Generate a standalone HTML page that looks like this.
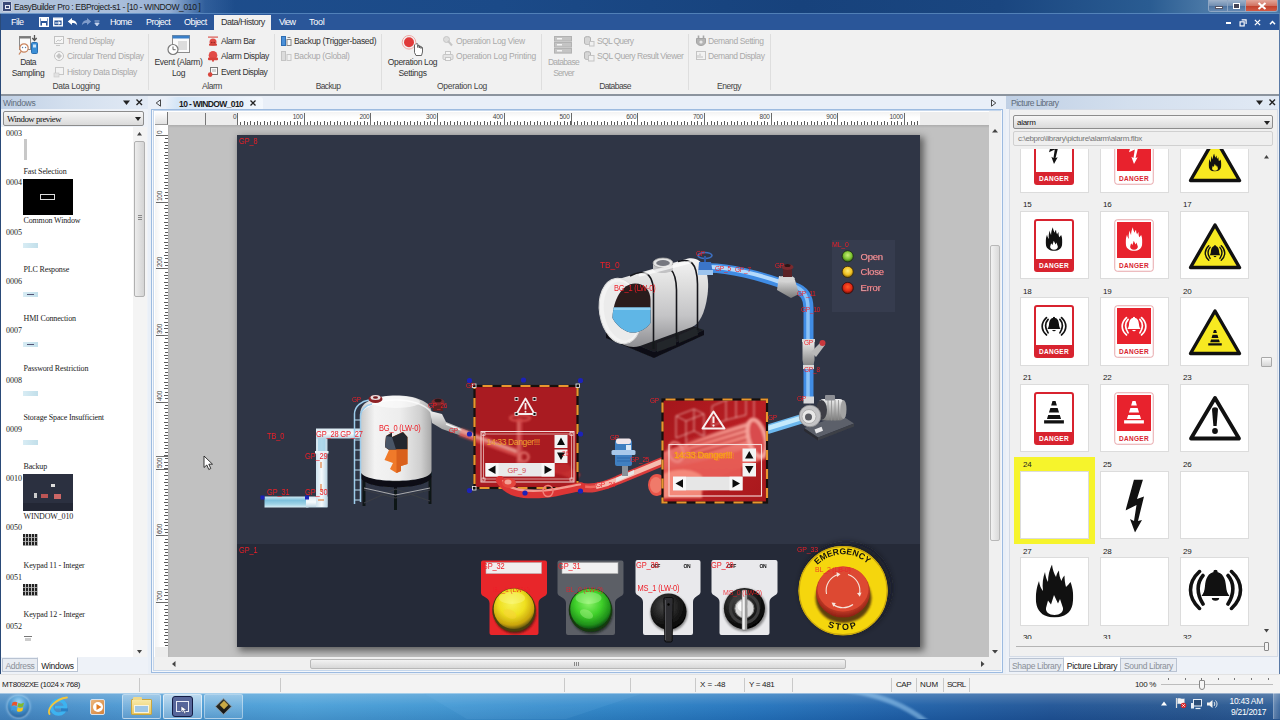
<!DOCTYPE html>
<html>
<head>
<meta charset="utf-8">
<title>EasyBuilder Pro : EBProject-s1 - [10 - WINDOW_010 ]</title>
<style>
*{box-sizing:border-box;margin:0;padding:0}
html,body{width:1280px;height:720px;overflow:hidden;background:#e9eff7;font-family:"Liberation Sans",sans-serif;font-size:9px;color:#222}
.a{position:absolute}
.t{position:absolute;white-space:nowrap;line-height:1}
#titlebar{left:0;top:0;width:1280px;height:14px;background:linear-gradient(90deg,#b3c4db 0,#a9bedb 120px,#93aed3 170px,rgba(60,105,165,.6) 205px,rgba(30,78,140,0) 235px),linear-gradient(90deg,#1f4f8e 0,#1b4a88 500px,#17427c 800px,#1a4680 1000px,#2a5c92 1150px,#4a78a6 1205px)}
#menubar{left:0;top:14px;width:1280px;height:16px;background:#2a5699}
#menubar .t{color:#fff;font-size:9px;top:4px}
#ribbon{left:0;top:30px;width:1280px;height:66px;background:#f1f1f1;border-bottom:2px solid #8c949e}
#ribbon .t{font-size:8.5px;color:#333}
#ribbon .d{color:#a9a9a9}
#ribbon .g{color:#444}
.sep{position:absolute;top:4px;width:1px;height:56px;background:#dedede}

body{letter-spacing:-.3px}
.hdr{position:absolute;height:13px;background:linear-gradient(90deg,#c0d0e5,#d3dfee 45%,#e2eaf5);}
.hdr .t{top:2.5px;font-size:8.5px;color:#5e6b7a}
.serif{font-family:"Liberation Serif",serif;letter-spacing:0}
#leftlist .n{position:absolute;left:5px;font:8px "Liberation Serif",serif;letter-spacing:0;color:#222;line-height:1}
#leftlist .l{position:absolute;left:22.5px;font:8px "Liberation Serif",serif;letter-spacing:-.15px;color:#222;line-height:1;white-space:nowrap}
.btab{position:absolute;top:658px;height:14px;font-size:8.5px;line-height:1;padding-top:3px;text-align:center;color:#8a8f98;border:1px solid #b9c3d2;background:#e8ecf2}
.btab.on{background:#fff;color:#222;border-top-color:#fff;height:15px}
.cell{position:absolute;width:68.5px;height:68.5px;background:#fff;border:1px solid #dcdcdc}
.cn{position:absolute;font-size:8px;color:#222;line-height:1}
#status .t{top:6px;font-size:8px;color:#1a1a1a}
#status .s{position:absolute;top:3px;width:1px;height:14px;background:#c9c9c9}
</style>
</head>
<body>
<!-- TITLE BAR -->
<div id="titlebar" class="a">
  <div class="t" style="letter-spacing:-0.372px;left:14px;top:3px;font-size:8.5px;color:#1a1a1a">EasyBuilder Pro : EBProject-s1 - [10 - WINDOW_010 ]</div>
  <div class="a" style="left:2px;top:1px;width:10px;height:11px;background:#3a4a78;border:1px solid #c8d2e4;border-radius:1px"><div class="a" style="left:2px;top:3px;width:5px;height:4px;border:1px solid #e8ecf6"></div></div>
  <div class="a" style="left:0;top:13px;width:1280px;height:1px;background:#5f8fc4;opacity:.8"></div>
  <div class="a" style="left:1208px;top:0;width:70px;height:12px;border:1px solid #8fa7c4;border-top:none;border-radius:0 0 3px 3px;overflow:hidden">
    <div class="a" style="left:0;top:0;width:19px;height:12px;background:linear-gradient(#9fb3cb,#6f8db1 50%,#4d729f 50%,#6a8db5);border-right:1px solid #8fa7c4"></div>
    <div class="a" style="left:19px;top:0;width:18px;height:12px;background:linear-gradient(#9fb3cb,#6f8db1 50%,#4d729f 50%,#6a8db5);border-right:1px solid #8fa7c4"></div>
    <div class="a" style="left:37px;top:0;width:33px;height:12px;background:linear-gradient(#e3a79b,#d0705f 50%,#c1402c 50%,#d6604a)"></div>
    <div class="a" style="left:6px;top:6px;width:8px;height:3px;background:#fff;border:0.5px solid #556"></div>
    <div class="a" style="left:24px;top:3px;width:7px;height:6px;border:1.500px solid #fff;background:#445"></div>
    <svg class="a" style="left:48px;top:2px" width="10" height="8"><path d="M1.500 1l7 6M8.500 1l-7 6" stroke="#fff" stroke-width="2"/></svg>
  </div>
</div>
<!-- MENU BAR -->
<div id="menubar" class="a">
  <div class="t" style="letter-spacing:-0.504px;left:11px">File</div>
  <div class="t" style="letter-spacing:-0.566px;left:110px">Home</div>
  <div class="t" style="letter-spacing:-0.538px;left:146px">Project</div>
  <div class="t" style="letter-spacing:-0.544px;left:184px">Object</div>
  <div class="a" style="left:214px;top:1px;width:57px;height:15px;background:#f1f1f1"></div>
  <div class="t" style="letter-spacing:-0.480px;left:221px;color:#333">Data/History</div>
  <div class="t" style="letter-spacing:-0.777px;left:279px">View</div>
  <div class="t" style="letter-spacing:-0.254px;left:309px">Tool</div>

  <svg class="a" style="left:39px;top:3px" width="10" height="10" viewBox="0 0 10 10"><rect x=".7" y=".7" width="8.600" height="8.600" fill="none" stroke="#fff" stroke-width="1.400"/><rect x="2" y="1" width="6" height="3" fill="#fff"/><rect x="3" y="6" width="4" height="3.500" fill="#fff"/></svg>
  <svg class="a" style="left:53px;top:3px" width="10" height="10" viewBox="0 0 10 10"><rect x=".7" y="1.200" width="8.600" height="7.600" fill="none" stroke="#fff" stroke-width="1.400"/><path d="M1 2h8v1.500H1zM2 5.500h3.500V4L8 6 5.500 8V6.500H2z" fill="#fff"/></svg>
  <svg class="a" style="left:67px;top:3px" width="11" height="10" viewBox="0 0 11 10"><path d="M5 1L.8 4.500 5 8V6c2.500 0 4 .5 5.200 2.500C10 5 8 3.200 5 3z" fill="#fff"/></svg>
  <svg class="a" style="left:81px;top:3px" width="11" height="10" viewBox="0 0 11 10"><path d="M6 1l4.200 3.500L6 8V6C3.500 6 2 6.500.8 8.500 1 5 3 3.200 6 3z" fill="#7f9ccb"/></svg>
  <svg class="a" style="left:94px;top:6px" width="6" height="7" viewBox="0 0 6 7"><path d="M.5 1h5M.8 3h4.400L3 6z" fill="#c8d6ee" stroke="#c8d6ee" stroke-width=".8"/></svg>
  <div class="a" style="left:1225.500px;top:8px;width:5px;height:2px;background:#fff"></div>
  <svg class="a" style="left:1239px;top:4.500px" width="8" height="8" viewBox="0 0 9 9"><path d="M3 1h5v4.500" fill="none" stroke="#fff" stroke-width="1.300"/><rect x="1.200" y="3.200" width="4.600" height="4.600" fill="none" stroke="#fff" stroke-width="1.300"/></svg>
  <svg class="a" style="left:1254px;top:5px" width="7" height="7" viewBox="0 0 8 8"><path d="M1 1l6 6M7 1L1 7" stroke="#fff" stroke-width="1.500"/></svg>
  <svg class="a" style="left:1268.500px;top:6px" width="7" height="5" viewBox="0 0 8 6"><path d="M1 5l3-3.200L7 5" stroke="#fff" stroke-width="1.800" fill="none"/></svg>
</div>
<!-- RIBBON -->
<div id="ribbon" class="a">
  <!-- Data Logging group -->
  <svg class="a" style="left:17px;top:4px" width="24" height="24" viewBox="0 0 24 24">
    <rect x="2.5" y="2.5" width="11" height="13" fill="#fafafa" stroke="#8a8a8a"/>
    <rect x="2.5" y="2.5" width="11" height="2" fill="#7a7a7a"/>
    <circle cx="7" cy="14" r="4.2" fill="#fff" stroke="#c9855f" stroke-width="1.2"/>
    <path d="M5.5 13.5h.1M8.5 13.5h.1" stroke="#5a7fa8" stroke-width="1.3" stroke-linecap="round"/>
    <path d="M4 17.5l-2 3" stroke="#c9855f" stroke-width="1.3"/>
    <rect x="14.5" y="8.5" width="6" height="11" rx="1" fill="#3b8fd6" stroke="#2a6fb0"/>
    <rect x="16" y="10.5" width="3" height="3" fill="#cfe6fa"/>
    <path d="M17.5 1v5M15.3 4l2.2 2.5 2.2-2.5" stroke="#555" stroke-width="1.3" fill="none"/>
  </svg>
  <div class="t" style="letter-spacing:-0.555px;left:18px;top:28px;width:20px;text-align:center">Data</div>
  <div class="t" style="letter-spacing:-0.336px;left:8px;top:38.5px;width:40px;text-align:center">Sampling</div>
  <svg class="a" style="left:53px;top:5px" width="12" height="12" viewBox="0 0 12 12"><rect x="1.5" y="1.5" width="9" height="7" fill="#f6f6f6" stroke="#c2c2c2"/><path d="M3 10.5h4M3 7l2-2 2 1 2-2" stroke="#c8c8c8" fill="none"/></svg>
  <div class="t d" style="letter-spacing:-0.356px;left:67px;top:6.5px">Trend Display</div>
  <svg class="a" style="left:53px;top:20px" width="12" height="12" viewBox="0 0 12 12"><circle cx="6" cy="6" r="4.5" fill="#f6f6f6" stroke="#c2c2c2"/><path d="M6 3l3 3-3 3-3-3z" fill="#c4c4c4"/></svg>
  <div class="t d" style="letter-spacing:-0.312px;left:67px;top:22px">Circular Trend Display</div>
  <svg class="a" style="left:53px;top:36px" width="12" height="12" viewBox="0 0 12 12"><rect x="2.5" y="1.5" width="8" height="7" fill="#f3f3f3" stroke="#c6c6c6"/><rect x="1" y="7" width="5" height="4" fill="#e2e2e2" stroke="#c8c8c8" stroke-width=".6"/></svg>
  <div class="t d" style="letter-spacing:-0.350px;left:67px;top:37.5px">History Data Display</div>
  <div class="t g" style="letter-spacing:-0.277px;left:26px;top:52px;width:100px;text-align:center">Data Logging</div>
  <div class="sep" style="left:148px"></div>
  <!-- Alarm group -->
  <svg class="a" style="left:166px;top:4px" width="26" height="24" viewBox="0 0 26 24">
    <rect x="6.5" y="1.5" width="17" height="17" fill="#fbfbfb" stroke="#8c8c8c"/>
    <rect x="6.5" y="1.5" width="17" height="3" fill="#3a7fc8"/>
    <rect x="12" y="7" width="9" height="9" fill="#dcdcdc"/>
    <circle cx="7" cy="15.5" r="5" fill="#fff" stroke="#7a7a7a" stroke-width="1.2"/>
    <path d="M7 12.5v3.2h2.6" stroke="#666" fill="none"/>
  </svg>
  <div class="t" style="letter-spacing:-0.305px;left:148px;top:28px;width:61px;text-align:center">Event (Alarm)</div>
  <div class="t" style="letter-spacing:-0.396px;left:148px;top:38.5px;width:61px;text-align:center">Log</div>
  <svg class="a" style="left:207px;top:5px" width="12" height="12" viewBox="0 0 12 12"><rect x="1" y="1.5" width="10" height="1.200" fill="#dc5850"/><circle cx="6" cy="7" r="3.500" fill="#de4a44"/><rect x="2" y="8.800" width="8" height="2" rx=".8" fill="#d04038"/><circle cx="4.800" cy="7.500" r=".7" fill="#8a2420"/><circle cx="7.200" cy="7.500" r=".7" fill="#8a2420"/></svg>
  <div class="t" style="letter-spacing:-0.394px;left:221px;top:6.5px">Alarm Bar</div>
  <svg class="a" style="left:207px;top:20px" width="12" height="12" viewBox="0 0 12 12"><circle cx="6" cy="5.300" r="4.300" fill="#e24a46"/><rect x="1" y="7.600" width="10" height="2.600" rx="1" fill="#d8403a"/><circle cx="6" cy="10.800" r="1" fill="#d8403a"/></svg>
  <div class="t" style="letter-spacing:-0.341px;left:221px;top:22px">Alarm Display</div>
  <svg class="a" style="left:207px;top:36px" width="12" height="12" viewBox="0 0 12 12"><rect x="3.5" y="1.5" width="7" height="7" fill="#f8f8f8" stroke="#777"/><rect x="5" y="3" width="4" height="3" fill="#d5d5d5"/><circle cx="3.2" cy="8.6" r="2.3" fill="#d9453c"/></svg>
  <div class="t" style="letter-spacing:-0.440px;left:221px;top:37.5px">Event Display</div>
  <div class="t g" style="letter-spacing:-0.441px;left:172px;top:52px;width:80px;text-align:center">Alarm</div>
  <div class="sep" style="left:274px"></div>
  <!-- Backup group -->
  <svg class="a" style="left:280px;top:5px" width="12" height="12" viewBox="0 0 12 12"><rect x="1.5" y="1.5" width="4" height="9" fill="#4a90d8" stroke="#2e6db2"/><rect x="7" y="4.5" width="4" height="6" fill="#fafafa" stroke="#888"/><path d="M7.5 2.5h3" stroke="#888"/></svg>
  <div class="t" style="letter-spacing:-0.306px;left:294px;top:6.5px">Backup (Trigger-based)</div>
  <svg class="a" style="left:280px;top:20px" width="12" height="12" viewBox="0 0 12 12"><rect x="1.5" y="1.5" width="4" height="9" fill="#dcdcdc" stroke="#c4c4c4"/><rect x="7" y="4.5" width="4" height="6" fill="#f2f2f2" stroke="#c8c8c8"/></svg>
  <div class="t d" style="letter-spacing:-0.364px;left:294px;top:22px">Backup (Global)</div>
  <div class="t g" style="letter-spacing:-0.602px;left:288px;top:52px;width:80px;text-align:center">Backup</div>
  <div class="sep" style="left:381px"></div>
  <!-- Operation Log -->
  <svg class="a" style="left:400px;top:3px" width="26" height="26" viewBox="0 0 26 26">
    <circle cx="9" cy="9.300" r="6.800" fill="none" stroke="#f0a8a4" stroke-width="1"/>
    <circle cx="9" cy="9.300" r="5" fill="#e03a3a"/>
    <path d="M14.5 11.5v8l1.5 3h5.5l1-3.5v-4.5l-1.5-.6v1.6-2l-1.6-.5v2-2.3l-1.6-.5v2.3V11.5c0-1.4-1.8-1.4-1.8 0" fill="#fff" stroke="#555" stroke-width=".9" stroke-linejoin="round"/>
  </svg>
  <div class="t" style="letter-spacing:-0.337px;left:382px;top:28px;width:61px;text-align:center">Operation Log</div>
  <div class="t" style="letter-spacing:-0.309px;left:382px;top:38.5px;width:61px;text-align:center">Settings</div>
  <svg class="a" style="left:442px;top:5px" width="12" height="12" viewBox="0 0 12 12"><circle cx="4.5" cy="4.5" r="3" fill="#ddd" stroke="#c6c6c6"/><path d="M6 6l4 4.5" stroke="#c6c6c6" stroke-width="2"/></svg>
  <div class="t d" style="letter-spacing:-0.320px;left:456px;top:6.5px">Operation Log View</div>
  <svg class="a" style="left:442px;top:20px" width="12" height="12" viewBox="0 0 12 12"><rect x="1" y="4.5" width="10" height="5" rx="1" fill="#e4e4e4" stroke="#c6c6c6"/><rect x="3.5" y="1.5" width="5" height="3" fill="#f6f6f6" stroke="#c6c6c6"/><rect x="3.5" y="7.5" width="5" height="3" fill="#f6f6f6" stroke="#c6c6c6"/></svg>
  <div class="t d" style="letter-spacing:-0.230px;left:456px;top:22px">Operation Log Printing</div>
  <div class="t g" style="letter-spacing:-0.298px;left:412px;top:52px;width:100px;text-align:center">Operation Log</div>
  <div class="sep" style="left:541px"></div>
  <!-- Database -->
  <svg class="a" style="left:553px;top:5px" width="20" height="20" viewBox="0 0 20 20"><g fill="#c4c4c4" stroke="#b2b2b2"><rect x="1.5" y="1.5" width="17" height="4.6"/><rect x="1.5" y="7.5" width="17" height="4.6"/><rect x="1.5" y="13.5" width="17" height="4.6"/></g><path d="M4 3.8h5M4 9.8h5M4 15.8h5" stroke="#f4f4f4" stroke-width="1.4"/></svg>
  <div class="t d" style="letter-spacing:-0.643px;left:533px;top:28px;width:61px;text-align:center">Database</div>
  <div class="t d" style="letter-spacing:-0.716px;left:533px;top:38.5px;width:61px;text-align:center">Server</div>
  <svg class="a" style="left:583px;top:5px" width="12" height="12" viewBox="0 0 12 12"><ellipse cx="4.5" cy="3" rx="3" ry="1.5" fill="#d0d0d0" stroke="#b4b4b4"/><path d="M1.5 3v5c0 2 6 2 6 0V3" fill="#d6d6d6" stroke="#b4b4b4"/><rect x="6.5" y="6.5" width="4.5" height="4.5" fill="#f0f0f0" stroke="#c4c4c4"/></svg>
  <div class="t d" style="letter-spacing:-0.661px;left:597px;top:6.5px">SQL Query</div>
  <svg class="a" style="left:583px;top:20px" width="12" height="12" viewBox="0 0 12 12"><ellipse cx="4.5" cy="3" rx="3" ry="1.5" fill="#d0d0d0" stroke="#b4b4b4"/><path d="M1.5 3v5c0 2 6 2 6 0V3" fill="#d6d6d6" stroke="#b4b4b4"/><rect x="5.5" y="5.5" width="5.5" height="5.5" fill="#f0f0f0" stroke="#c4c4c4"/></svg>
  <div class="t d" style="letter-spacing:-0.450px;left:597px;top:22px">SQL Query Result Viewer</div>
  <div class="t g" style="letter-spacing:-0.580px;left:575px;top:52px;width:80px;text-align:center">Database</div>
  <div class="sep" style="left:688px"></div>
  <!-- Energy -->
  <svg class="a" style="left:695px;top:5px" width="12" height="12" viewBox="0 0 12 12"><path d="M3.5 .5v3M8.5 .5v3" stroke="#a8a8a8" stroke-width="1.600"/><path d="M1.500 3.500h9v3.500c0 2-2 3.500-4.500 3.500S1.500 9 1.500 7z" fill="#b4b4b4" stroke="#a4a4a4"/><circle cx="6" cy="7" r="1.600" fill="#e8e8e8"/></svg>
  <div class="t d" style="letter-spacing:-0.390px;left:708px;top:6.5px">Demand Setting</div>
  <svg class="a" style="left:695px;top:20px" width="12" height="12" viewBox="0 0 12 12"><rect x="1.5" y="1.5" width="9" height="8" fill="#f2f2f2" stroke="#c4c4c4"/><path d="M3 8V5M5 8V3.5M7 8V6" stroke="#c8c8c8" stroke-width="1.2"/></svg>
  <div class="t d" style="letter-spacing:-0.420px;left:708px;top:22px">Demand Display</div>
  <div class="t g" style="letter-spacing:-0.490px;left:689px;top:52px;width:80px;text-align:center">Energy</div>
  <div class="sep" style="left:770px"></div>
</div>

<!-- strip under ribbon -->
<!-- LEFT PANEL -->
<div class="a" style="left:0;top:96px;width:148px;height:578px;background:#eef2f8"></div>
<div class="hdr" style="left:0;top:96px;width:148px">
  <div class="t" style="left:3px">Windows</div>
  <svg class="a" style="left:123px;top:3px" width="8" height="7"><path d="M0 1.5h7L3.5 6z" fill="#222"/></svg>
  <svg class="a" style="left:135px;top:2px" width="9" height="9"><path d="M1.5 1.5l5.5 5.5M7 1.5L1.5 7" stroke="#222" stroke-width="1.4"/></svg>
</div>
<div class="a" style="left:3px;top:111px;width:141px;height:15px;border:1px solid #8c8c8c;border-radius:2px;background:linear-gradient(#f6f6f6,#dadada)">
  <div class="t serif" style="left:3px;top:2.500px;font-size:8.800px;color:#111;letter-spacing:-.45px">Window preview</div>
  <svg class="a" style="left:131px;top:5px" width="7" height="5"><path d="M0 0h6L3 4z" fill="#222"/></svg>
</div>
<div id="leftlist" class="a" style="left:1px;top:127px;width:146px;height:530px;background:#fff;overflow:hidden">
<div class="n" style="top:3.0px">0003</div>
<div class="l" style="top:40.5px">Fast Selection</div>
<div class="a" style="left:23px;top:12.0px;width:3px;height:21px;background:#c8c8c8"></div>
<div class="n" style="top:52.3px">0004</div>
<div class="l" style="top:89.8px">Common Window</div>
<div class="a" style="left:22px;top:52.3px;width:50px;height:36px;background:#000"><div class="a" style="left:17px;top:15px;width:15px;height:6px;border:1px solid #ddd"></div></div>
<div class="n" style="top:101.6px">0005</div>
<div class="l" style="top:139.1px">PLC Response</div>
<div class="a" style="left:22px;top:116.1px;width:15px;height:5px;background:linear-gradient(90deg,#d8ecf4,#c2dfea)"></div>
<div class="n" style="top:150.9px">0006</div>
<div class="l" style="top:188.4px">HMI Connection</div>
<div class="a" style="left:22px;top:165.4px;width:15px;height:5px;background:linear-gradient(90deg,#d8ecf4,#c2dfea)"><div class="a" style="left:4px;top:2px;width:7px;height:1px;background:#557"></div></div>
<div class="n" style="top:200.2px">0007</div>
<div class="l" style="top:237.7px">Password Restriction</div>
<div class="a" style="left:22px;top:214.7px;width:15px;height:5px;background:linear-gradient(90deg,#d8ecf4,#c2dfea)"><div class="a" style="left:4px;top:2px;width:7px;height:1px;background:#557"></div></div>
<div class="n" style="top:249.5px">0008</div>
<div class="l" style="top:287.0px">Storage Space Insufficient</div>
<div class="a" style="left:22px;top:264.0px;width:15px;height:5px;background:linear-gradient(90deg,#d8ecf4,#c2dfea)"></div>
<div class="n" style="top:298.8px">0009</div>
<div class="l" style="top:336.3px">Backup</div>
<div class="a" style="left:22px;top:313.3px;width:15px;height:5px;background:linear-gradient(90deg,#d8ecf4,#c2dfea)"></div>
<div class="n" style="top:348.1px">0010</div>
<div class="l" style="top:385.6px">WINDOW_010</div>
<div class="a" style="left:22px;top:347.1px;width:50px;height:36px;background:#2b3040"><div class="a" style="left:0;top:29px;width:50px;height:8px;background:#232735"></div><div class="a" style="left:28px;top:10px;width:4px;height:3px;background:#ddd"></div><div class="a" style="left:11px;top:19px;width:3px;height:5px;background:#ccc"></div><div class="a" style="left:18px;top:20px;width:7px;height:4px;background:#b55"></div><div class="a" style="left:31px;top:20px;width:7px;height:5px;background:#c66"></div></div>
<div class="n" style="top:397.4px">0050</div>
<div class="l" style="top:434.9px">Keypad 11 - Integer</div>
<div class="a" style="left:22px;top:407.4px;width:15px;height:12px;background:#222;background-image:repeating-linear-gradient(90deg,transparent 0 2px,#bbb 2px 3px),repeating-linear-gradient(transparent 0 3px,#999 3px 4px)"></div>
<div class="n" style="top:446.7px">0051</div>
<div class="l" style="top:484.2px">Keypad 12 - Integer</div>
<div class="a" style="left:22px;top:456.7px;width:15px;height:12px;background:#222;background-image:repeating-linear-gradient(90deg,transparent 0 2px,#bbb 2px 3px),repeating-linear-gradient(transparent 0 3px,#999 3px 4px)"></div>
<div class="n" style="top:496.0px">0052</div>
<div class="a" style="left:23px;top:509.0px;width:8px;height:1px;background:#777"></div><div class="a" style="left:24px;top:511.0px;width:6px;height:3px;background:#ccc"></div>
<div class="a" style="left:132px;top:0;width:14px;height:530px;background:#f4f4f4"></div>
<svg class="a" style="left:135.500px;top:5px" width="5" height="4"><path d="M0 3.5h5L2.500 0z" fill="#444"/></svg>
<svg class="a" style="left:135.500px;top:523px" width="5" height="4"><path d="M0 0h5L2.500 3.500z" fill="#444"/></svg>
<div class="a" style="left:133px;top:14px;width:10.500px;height:156px;border:1px solid #b0b0b0;border-radius:2px;background:linear-gradient(90deg,#ececec,#d4d4d4)"></div>
<div class="a" style="left:136.500px;top:88px;width:4px;height:5px;background:repeating-linear-gradient(#888 0 1px,transparent 1px 2px)"></div>
</div>
<div class="btab" style="left:2px;width:36px">Address</div>
<div class="btab on" style="left:37px;top:657px;width:41px;padding-top:4px">Windows</div>

<!-- CENTER -->
<div class="a" style="left:150px;top:96px;width:854px;height:14px;background:#e9eff8"></div>
<svg class="a" style="left:155px;top:99px" width="7" height="8"><path d="M5.5 .8L1.2 4l4.3 3.2z" fill="none" stroke="#333" stroke-width=".9"/></svg>
<div class="a" style="left:166px;top:97px;width:97px;height:13px;background:linear-gradient(100deg,rgba(255,255,255,0) 0,#d5e6f7 12px,#e4eefa 60%,#f4f8fd);border-radius:0 3px 0 0"></div>
<div class="t" style="left:179px;top:99.5px;font-size:8.5px;font-weight:bold;color:#1a1a1a;letter-spacing:-.6px">10 - WINDOW_010</div>
<svg class="a" style="left:249px;top:99px" width="9" height="9"><path d="M1.5 1.5l5 5M6.5 1.5l-5 5" stroke="#222" stroke-width="1.3"/></svg>
<svg class="a" style="left:990px;top:99px" width="7" height="8"><path d="M1.5 .8L5.8 4 1.5 7.2z" fill="none" stroke="#333" stroke-width=".9"/></svg>
<div class="a" style="left:151px;top:109px;width:852px;height:564px;border:1px solid #9dbbe0;background:#f4f7fb"></div>
<div class="a" style="left:153px;top:110px;width:848px;height:561px;border:1px solid #c4d6ec;background:#fff"></div>
<!-- workspace gray -->
<div class="a" style="left:168px;top:125px;width:821px;height:532px;background:#c1c1c1"></div>
<div class="a" style="left:168px;top:125px;width:821px;height:3px;background:linear-gradient(#adadad,#c1c1c1)"></div>
<div class="a" style="left:168px;top:125px;width:2px;height:532px;background:linear-gradient(90deg,#b4b4b4,rgba(193,193,193,0))"></div>
<!-- rulers placeholder -->
<div id="rulers">
<div class="a" style="left:155px;top:112px;width:834px;height:13px;background:#ededed;overflow:hidden">
<div class="a" style="left:82px;top:0;width:683px;height:13px;background:linear-gradient(#f3f3f3,#fff 45%)"></div>
<div class="a" style="left:0;top:0;width:13px;height:13px;background:linear-gradient(#fdfdfd,#e2e2e2);border-right:1px solid #777;border-bottom:1px solid #999"></div>
<div class="a" style="left:82px;top:10px;width:684px;height:3px;background:repeating-linear-gradient(90deg,#5a5a5a 0 1px,transparent 1px 3.3350px)"></div>
<div class="a" style="left:82px;top:8.5px;width:684px;height:2px;background:repeating-linear-gradient(90deg,#5a5a5a 0 1px,transparent 1px 6.6699px)"></div>
<div class="a" style="left:82.0px;top:1px;width:1px;height:12px;background:#6a6a6a"></div>
<div class="t" style="left:78.0px;top:1.500px;font-size:6.500px;color:#444;letter-spacing:-.25px">0</div>
<div class="a" style="left:148.7px;top:1px;width:1px;height:12px;background:#6a6a6a"></div>
<div class="t" style="left:137.7px;top:1.500px;font-size:6.500px;color:#444;letter-spacing:-.25px">100</div>
<div class="a" style="left:215.4px;top:1px;width:1px;height:12px;background:#6a6a6a"></div>
<div class="t" style="left:204.4px;top:1.500px;font-size:6.500px;color:#444;letter-spacing:-.25px">200</div>
<div class="a" style="left:282.1px;top:1px;width:1px;height:12px;background:#6a6a6a"></div>
<div class="t" style="left:271.1px;top:1.500px;font-size:6.500px;color:#444;letter-spacing:-.25px">300</div>
<div class="a" style="left:348.8px;top:1px;width:1px;height:12px;background:#6a6a6a"></div>
<div class="t" style="left:337.8px;top:1.500px;font-size:6.500px;color:#444;letter-spacing:-.25px">400</div>
<div class="a" style="left:415.5px;top:1px;width:1px;height:12px;background:#6a6a6a"></div>
<div class="t" style="left:404.5px;top:1.500px;font-size:6.500px;color:#444;letter-spacing:-.25px">500</div>
<div class="a" style="left:482.2px;top:1px;width:1px;height:12px;background:#6a6a6a"></div>
<div class="t" style="left:471.2px;top:1.500px;font-size:6.500px;color:#444;letter-spacing:-.25px">600</div>
<div class="a" style="left:548.9px;top:1px;width:1px;height:12px;background:#6a6a6a"></div>
<div class="t" style="left:537.9px;top:1.500px;font-size:6.500px;color:#444;letter-spacing:-.25px">700</div>
<div class="a" style="left:615.6px;top:1px;width:1px;height:12px;background:#6a6a6a"></div>
<div class="t" style="left:604.6px;top:1.500px;font-size:6.500px;color:#444;letter-spacing:-.25px">800</div>
<div class="a" style="left:682.3px;top:1px;width:1px;height:12px;background:#6a6a6a"></div>
<div class="t" style="left:671.3px;top:1.500px;font-size:6.500px;color:#444;letter-spacing:-.25px">900</div>
<div class="a" style="left:749.0px;top:1px;width:1px;height:12px;background:#6a6a6a"></div>
<div class="t" style="left:734.5px;top:1.500px;font-size:6.500px;color:#444;letter-spacing:-.25px">1000</div>
<div class="a" style="left:50px;top:1px;width:1px;height:12px;background:#777"></div>
</div>
<div class="a" style="left:155px;top:125px;width:13px;height:532px;background:#ededed;overflow:hidden">
<div class="a" style="left:0;top:0;width:13px;height:522px;background:linear-gradient(90deg,#f3f3f3,#fff 45%)"></div>
<div class="a" style="left:10px;top:10px;width:3px;height:513px;background:repeating-linear-gradient(#5a5a5a 0 1px,transparent 1px 3.3350px)"></div>
<div class="a" style="left:8.500px;top:10px;width:2px;height:513px;background:repeating-linear-gradient(#5a5a5a 0 1px,transparent 1px 6.6699px)"></div>
<div class="a" style="left:1px;top:10.0px;width:12px;height:1px;background:#6a6a6a"></div>
<div class="t" style="left:1.500px;top:9.0px;font-size:6.500px;color:#444;letter-spacing:-.25px;transform-origin:0 0;transform:rotate(-90deg)">0</div>
<div class="a" style="left:1px;top:76.7px;width:12px;height:1px;background:#6a6a6a"></div>
<div class="t" style="left:1.500px;top:75.7px;font-size:6.500px;color:#444;letter-spacing:-.25px;transform-origin:0 0;transform:rotate(-90deg)">100</div>
<div class="a" style="left:1px;top:143.4px;width:12px;height:1px;background:#6a6a6a"></div>
<div class="t" style="left:1.500px;top:142.4px;font-size:6.500px;color:#444;letter-spacing:-.25px;transform-origin:0 0;transform:rotate(-90deg)">200</div>
<div class="a" style="left:1px;top:210.1px;width:12px;height:1px;background:#6a6a6a"></div>
<div class="t" style="left:1.500px;top:209.1px;font-size:6.500px;color:#444;letter-spacing:-.25px;transform-origin:0 0;transform:rotate(-90deg)">300</div>
<div class="a" style="left:1px;top:276.8px;width:12px;height:1px;background:#6a6a6a"></div>
<div class="t" style="left:1.500px;top:275.8px;font-size:6.500px;color:#444;letter-spacing:-.25px;transform-origin:0 0;transform:rotate(-90deg)">400</div>
<div class="a" style="left:1px;top:343.5px;width:12px;height:1px;background:#6a6a6a"></div>
<div class="t" style="left:1.500px;top:342.5px;font-size:6.500px;color:#444;letter-spacing:-.25px;transform-origin:0 0;transform:rotate(-90deg)">500</div>
<div class="a" style="left:1px;top:410.2px;width:12px;height:1px;background:#6a6a6a"></div>
<div class="t" style="left:1.500px;top:409.2px;font-size:6.500px;color:#444;letter-spacing:-.25px;transform-origin:0 0;transform:rotate(-90deg)">600</div>
<div class="a" style="left:1px;top:476.9px;width:12px;height:1px;background:#6a6a6a"></div>
<div class="t" style="left:1.500px;top:475.9px;font-size:6.500px;color:#444;letter-spacing:-.25px;transform-origin:0 0;transform:rotate(-90deg)">700</div>
<div class="a" style="left:1px;top:331px;width:12px;height:1px;background:#777"></div>
</div>
</div>
<!-- canvas -->
<div id="canvas" class="a" style="left:237px;top:135px;width:683px;height:512px;background:#2f3545;box-shadow:3px 3px 7px 1px rgba(0,0,0,.5);overflow:hidden">
<svg class="a" style="left:0;top:0" width="683" height="512" viewBox="237 135 683 512" font-family="Liberation Sans,sans-serif">
<defs>
  <linearGradient id="gTankH" x1="0" y1="0" x2="0" y2="1"><stop offset="0" stop-color="#f4f4f4"/><stop offset=".3" stop-color="#dedede"/><stop offset=".65" stop-color="#c4c4c6"/><stop offset="1" stop-color="#8e8e92"/></linearGradient>
  <linearGradient id="gTankV" x1="0" y1="0" x2="1" y2="0"><stop offset="0" stop-color="#c9c9c9"/><stop offset=".2" stop-color="#f3f3f3"/><stop offset=".55" stop-color="#ededed"/><stop offset=".85" stop-color="#cfcfcf"/><stop offset="1" stop-color="#a8a8a8"/></linearGradient>
  <linearGradient id="gPipeB" x1="0" y1="0" x2="1" y2="0"><stop offset="0" stop-color="#3f8fe0"/><stop offset=".45" stop-color="#a8d4fb"/><stop offset="1" stop-color="#3a84d6"/></linearGradient>
  <linearGradient id="gPipeBh" x1="0" y1="0" x2="0" y2="1"><stop offset="0" stop-color="#3f8fe0"/><stop offset=".45" stop-color="#a8d4fb"/><stop offset="1" stop-color="#3a84d6"/></linearGradient>
  <linearGradient id="gPipeW" x1="0" y1="0" x2="0" y2="1"><stop offset="0" stop-color="#d9e9f2"/><stop offset=".5" stop-color="#f6fbfd"/><stop offset="1" stop-color="#b9d3e2"/></linearGradient>
  <linearGradient id="gPipeWv" x1="0" y1="0" x2="1" y2="0"><stop offset="0" stop-color="#cfe3ee"/><stop offset=".5" stop-color="#f4f9fc"/><stop offset="1" stop-color="#b9d3e2"/></linearGradient>
  <linearGradient id="gPipeC" x1="0" y1="0" x2="0" y2="1"><stop offset="0" stop-color="#cfe9f3"/><stop offset=".35" stop-color="#7cc0dc"/><stop offset=".7" stop-color="#9fd3e6"/><stop offset="1" stop-color="#d9eef6"/></linearGradient>
  <linearGradient id="gSteel" x1="0" y1="0" x2="0" y2="1"><stop offset="0" stop-color="#f0f0f0"/><stop offset=".5" stop-color="#b4b4b4"/><stop offset="1" stop-color="#7a7a7a"/></linearGradient>
  <radialGradient id="gYel" cx=".45" cy=".35" r=".65"><stop offset="0" stop-color="#f7f35a"/><stop offset=".5" stop-color="#efe01f"/><stop offset=".85" stop-color="#c9a40c"/><stop offset="1" stop-color="#6a5a08"/></radialGradient>
  <radialGradient id="gGrn" cx=".45" cy=".35" r=".65"><stop offset="0" stop-color="#8cf26a"/><stop offset=".5" stop-color="#3fd02a"/><stop offset=".85" stop-color="#1f8f1a"/><stop offset="1" stop-color="#0d4a10"/></radialGradient>
  <radialGradient id="gRedB" cx=".5" cy=".4" r=".6"><stop offset="0" stop-color="#e2573a"/><stop offset=".7" stop-color="#d4432c"/><stop offset="1" stop-color="#8a1f14"/></radialGradient>
  <radialGradient id="gKnob" cx=".4" cy=".35" r=".7"><stop offset="0" stop-color="#4a4a4a"/><stop offset=".6" stop-color="#1a1a1a"/><stop offset="1" stop-color="#000"/></radialGradient>
  <radialGradient id="gLedG" cx=".5" cy=".4" r=".6"><stop offset="0" stop-color="#c9ee7a"/><stop offset=".6" stop-color="#7cc230"/><stop offset="1" stop-color="#2f5a10"/></radialGradient>
  <radialGradient id="gLedY" cx=".5" cy=".4" r=".6"><stop offset="0" stop-color="#fbe97a"/><stop offset=".6" stop-color="#f0c020"/><stop offset="1" stop-color="#7a5a08"/></radialGradient>
  <radialGradient id="gLedR" cx=".5" cy=".4" r=".6"><stop offset="0" stop-color="#ff5a2a"/><stop offset=".6" stop-color="#e02a14"/><stop offset="1" stop-color="#6a0f08"/></radialGradient>
  <linearGradient id="gBox2" x1="0" y1="0" x2="1" y2="1"><stop offset="0" stop-color="#a4161b"/><stop offset=".5" stop-color="#b81e23"/><stop offset="1" stop-color="#a8181c"/></linearGradient><clipPath id="cpB2"><rect x="662" y="399" width="105" height="103.500"/></clipPath>
  <linearGradient id="gCyl" x1="0" y1="0" x2="0" y2="1"><stop offset="0" stop-color="#f6a29a"/><stop offset=".35" stop-color="#ee7a72"/><stop offset="1" stop-color="#dc4644"/></linearGradient>
  <filter id="blur1"><feGaussianBlur stdDeviation="1"/></filter>
  <filter id="blur3"><feGaussianBlur stdDeviation="3"/></filter>
  <filter id="soft"><feGaussianBlur stdDeviation=".45"/></filter>
</defs>
<!-- bottom panel -->
<rect x="237" y="544" width="683" height="103" fill="#252a38"/>
<!-- legend -->
<rect x="832" y="240" width="63" height="72" fill="#363c4e"/>
<g filter="url(#soft)">
<circle cx="847.700" cy="256.300" r="5.600" fill="url(#gLedG)" stroke="#1d2a14" stroke-width=".8"/>
<circle cx="847.700" cy="271.900" r="5.600" fill="url(#gLedY)" stroke="#3a2a08" stroke-width=".8"/>
<circle cx="847.700" cy="288" r="5.600" fill="url(#gLedR)" stroke="#3a0a08" stroke-width=".8"/>
<g font-size="9.500" fill="#f6d6da" stroke="#d8383f" stroke-width=".25" letter-spacing="-.2">
<text x="860.500" y="259.500">Open</text><text x="860.500" y="275">Close</text><text x="860.500" y="291">Error</text></g>
</g>
<!-- ===== horizontal tank ===== -->
<g filter="url(#soft)">
<!-- base -->
<path d="M606 332L654 352L704 330V335L654 358L606 338z" fill="#0f1014"/>
<path d="M606 332L654 352L704 330L670 318L620 322z" fill="#1b1d22"/>
<!-- body -->
<path d="M612 281L688 258.500C703 256 710.500 272 707.500 295C705 314 699 324 692 327L640 346C625 350 612 340 606 322z" fill="url(#gTankH)"/>
<!-- under-body dark gaps -->
<path d="M657 343L676 336L676 345L657 352z" fill="#23252b"/>
<path d="M679 335L697 327L698 335L679 343z" fill="#23252b"/>
<!-- front face -->
<ellipse cx="620.500" cy="311" rx="21" ry="33" transform="rotate(-9 620.500 311)" fill="#f3f3f3" stroke="#dcdcdc" stroke-width="1"/>
<ellipse cx="622" cy="311" rx="18" ry="29.500" transform="rotate(-9 622 311)" fill="#e6e6e6" opacity=".6"/>
<!-- window -->
<path d="M612.500 318C613 300 622 283.500 635 283.500C645 283.500 650.500 291 650.500 300V323C645 331 634 335 626 331C620 328 615 323 612.500 318z" fill="#2a1a1e"/>
<path d="M612.500 318C612.600 314 613 311 613.800 307.500H650.500V323C645 331 634 335 626 331C620 328 615 323 612.500 318z" fill="#5eb6e6"/>
<path d="M613.800 307.500H650.500V310H613.300z" fill="#8fd0f2"/>
<!-- straps -->
<g fill="none" stroke="#17181c" stroke-width="1.600">
<path d="M630 276C640 271 652 268.500 653.500 290V349"/>
<path d="M656 268C668 264 676 268 676.500 290V339"/>
<path d="M678 261.500C690 258 697 262 697.500 284V330"/>
</g>
<!-- manhole -->
<path d="M653 263v5.500c0 6 20 6 20 0V263z" fill="#c2c2c4"/><ellipse cx="663" cy="263" rx="10" ry="5" fill="#e4e4e4" stroke="#a2a2a2" stroke-width=".8"/>
<ellipse cx="663" cy="263" rx="6.800" ry="3" fill="#767880"/>
<!-- highlight -->
<path d="M640 275L690 262" stroke="#fff" stroke-width="3" opacity=".7" stroke-linecap="round"/>
</g>
<!-- ===== piping from tank to pump ===== -->
<g filter="url(#soft)">
<!-- top pipe -->
<path d="M709 268C730 268 760 276 780 283" fill="none" stroke="#3f8ce4" stroke-width="9.500" stroke-linecap="round"/>
<path d="M709 267C730 267 760 275 780 282" fill="none" stroke="#b4dafc" stroke-width="4" stroke-linecap="round"/>
<!-- elbow + vertical -->
<path d="M794 287C803 290 808.500 296 808.500 308V400" fill="none" stroke="#3f8ce4" stroke-width="10"/>
<path d="M794 286C803 289 808 296 808 308V400" fill="none" stroke="#8cc2f6" stroke-width="3.500"/>
<!-- blue gate valve at tank -->
<ellipse cx="705" cy="255.500" rx="7" ry="3" fill="none" stroke="#3c6fc0" stroke-width="1.600"/>
<path d="M705 256v8" stroke="#2d5aa8" stroke-width="2"/>
<path d="M699 262h12l2 12h-15z" fill="#3a74c8"/><path d="M698 270h15v5h-15z" fill="#9cc4ee"/>
<!-- gray globe valve -->
<path d="M779 276l16 4 4 14-8 4-14-8z" fill="url(#gSteel)"/>
<ellipse cx="787" cy="279" rx="8" ry="3.500" fill="#d4d4d4"/>
<path d="M783 268h9v9h-9z" fill="#5a2226"/><ellipse cx="787.500" cy="267" rx="6" ry="3" fill="#7a2a2e"/><ellipse cx="787.500" cy="265.500" rx="3" ry="1.500" fill="#2a1416"/>
<!-- Y strainer -->
<path d="M802.500 340h12v20l-1.500 8h-9l-1.500-8z" fill="url(#gSteel)"/>
<path d="M811 352l10-10 4 3-9 12z" fill="#b9b9b9"/><circle cx="822.500" cy="343" r="3" fill="#c8383c"/>
<rect x="802" y="339" width="13" height="3" fill="#d8d8d8"/><rect x="803" y="365" width="11" height="4" fill="#dadada"/>
<!-- pump -->
<path d="M804 428l14 9.500 36-14-13-8.500z" fill="#5c606a"/>
<path d="M804 428l14 9.500v3l-14-9.500z" fill="#2a2c32"/><path d="M818 437.500l36-14v3l-36 14z" fill="#3c3f47"/>
<path d="M814.500 429.500l7-2.800 1.500 4-7 2.800z" fill="#e8e8ea"/>
<rect x="819" y="399" width="25" height="21.500" rx="4.500" fill="url(#gSteel)"/>
<path d="M828 400v20M831.500 399.500v21M835 399.500v21M838.500 400v20" stroke="#8e8e8e" stroke-width=".8"/>
<ellipse cx="843.500" cy="409.500" rx="3" ry="9.500" fill="#a2a2a2"/>
<rect x="825" y="395" width="10" height="5.500" rx="1" fill="#8c8e94"/>
<ellipse cx="821.500" cy="410" rx="5.500" ry="10" fill="#3c3e44"/>
<!-- discharge pipe to box2 -->
<path d="M806 417.500L767 429.500" fill="none" stroke="#6cb8ee" stroke-width="9.500"/>
<path d="M806 416.500L767 428.500" fill="none" stroke="#c4eafc" stroke-width="4.500"/>
<rect x="803.500" y="396.500" width="10.500" height="7" fill="#d9d9dc"/>
<circle cx="810" cy="416" r="10.800" fill="#c4c4c6" stroke="#8c8c8e" stroke-width=".8"/>
<circle cx="809" cy="416.500" r="7" fill="#e8e8e8" stroke="#a6a6a6" stroke-width=".8"/>
<circle cx="808.500" cy="417" r="3.500" fill="#5a5c62"/>
</g>
<!-- ===== left pipes ===== -->
<g filter="url(#soft)">
<rect x="264.500" y="496.500" width="44" height="11" fill="url(#gPipeC)"/>
<rect x="306" y="496.500" width="21.500" height="11" fill="url(#gPipeW)"/>
<rect x="316" y="429" width="11.500" height="78" fill="url(#gPipeWv)"/>
<rect x="318" y="436" width="7.500" height="16" fill="#9dd0e6" opacity=".8"/>
<rect x="316" y="428.500" width="46" height="10" fill="url(#gPipeW)"/>
<path d="M321 462v6M321 484v8M318 500h6" stroke="#e8a070" stroke-width="2" opacity=".8"/>
<rect x="315" y="451" width="13.500" height="2.500" fill="#e9f2f7"/>
<!-- ===== vertical tank ===== -->
<!-- legs -->
<g stroke="#111318" fill="none">
<path d="M364 476v30M395.500 482v28M430 476v28" stroke-width="3"/>
<path d="M364 490l31.500 8 34.500-8M364 503l31.500-14M395.500 489l34.500 12" stroke-width="1.200" stroke="#3a3d44"/>
<path d="M364 488l31.500 7 34.500-7" stroke="#c8c8c8" stroke-width=".8"/>
</g>
<path d="M360.500 470C360.500 485 431.500 485 431.500 470V476C431.500 491 360.500 491 360.500 476z" fill="#0d0e12"/>
<!-- body -->
<path d="M360.500 412C360.500 390 431.500 390 431.500 412V471C431.500 484 360.500 484 360.500 471z" fill="url(#gTankV)"/>
<path d="M361 412C375 396 418 396 431 412" fill="none" stroke="#fff" stroke-width="1.500" opacity=".7"/>
<ellipse cx="396" cy="402" rx="24" ry="6" fill="#fff" opacity=".55"/>
<!-- level indicator -->
<path d="M386 436L392 432.500V437L403 432L407.500 437V464L401 466V471L396.500 473L390 469L393 463L384.500 460L389 450L385 447z" fill="#f07a2a"/>
<path d="M386 436L392 432.500V437L403 432L407.500 437V449.500H388.500L385 447z" fill="#23272f"/>
<path d="M392 437L396 449.500H388.500L385 447L386 436z" fill="#4a5566"/>
<path d="M396.500 449.500V473L401 471V466L407.500 464V449.500z" fill="#d9601a"/>
<!-- ladder -->
<g fill="none" stroke="#9ccbea" stroke-width="1.500">
<path d="M354.500 504V414C354.500 406 362 401 369 400"/><path d="M360.500 502V416C360.500 410 366 405 372 404"/>
</g>
<path d="M354.500 420h6M354.500 430h6M354.500 440h6M354.500 450h6M354.500 460h6M354.500 470h6M354.500 480h6M354.500 490h6M354.500 500h6" stroke="#b9dcf2" stroke-width="1"/>
<!-- red cap -->
<ellipse cx="375.500" cy="399" rx="7" ry="4" fill="#8e2226"/><ellipse cx="375.500" cy="397.500" rx="5" ry="2.500" fill="#e8e0e0"/><ellipse cx="375.500" cy="397.500" rx="2.500" ry="1.300" fill="#7a1a1e"/>
<!-- tank valve + gray pipe to box1 -->
<path d="M430 411l12 3 4 8 30 12v7l-34-12-10-6z" fill="url(#gSteel)"/>
<path d="M446 424l30 12" stroke="#f4f4f4" stroke-width="1.500"/>
<path d="M433 402h10v9h-10z" fill="#5a2024"/><ellipse cx="438" cy="402" rx="6.500" ry="3.500" fill="#7c2a2e"/><ellipse cx="438" cy="400.500" rx="3.500" ry="1.800" fill="#2a1214"/>
</g>
<!-- ===== red pipe between boxes + blue meter ===== -->
<g filter="url(#soft)">
<path d="M572 486C590 490 600 488 618 480L664 461" fill="none" stroke="#d83a3a" stroke-width="9"/>
<path d="M596 486.500C604 485 610 483 618 479.500L664 460.500" fill="none" stroke="#f6bcb0" stroke-width="5"/>
<path d="M574 485C584 487 590 487.500 596 486.500" fill="none" stroke="#f06a60" stroke-width="2.500"/>
<path d="M616 482l18-8v-4l-18 8z" fill="#e6e6e6"/>
<rect x="622" y="462" width="6" height="14" fill="#8a9098"/>
<rect x="615" y="440" width="17" height="26" rx="2" fill="#3f7fc0"/>
<rect x="611.500" y="450" width="24" height="5" rx="1.500" fill="#a9c8ea"/>
<rect x="616" y="438.500" width="15" height="5.500" rx="2" fill="#f0e6ea"/>
<rect x="626" y="445" width="5" height="5" fill="#dce9f6"/>
<path d="M617 458h13M617 461h13" stroke="#2f67a8" stroke-width="1"/>
<ellipse cx="657" cy="485" rx="9" ry="11" fill="#e8544a"/>
<ellipse cx="656" cy="485" rx="6" ry="8" fill="#f07a6a"/>
</g>
<!-- ===== RED BOX 1 ===== -->
<g>
<rect x="474" y="385.500" width="104" height="103" fill="#a91b21"/>
<!-- translucent valve image -->
<g filter="url(#blur1)" opacity=".9">
<path d="M460 432L518 453" stroke="#d8504e" stroke-width="8" fill="none"/>
<path d="M460 431L518 452" stroke="#eea79c" stroke-width="2.500" fill="none"/>
<path d="M519.500 418v46" stroke="#cf4446" stroke-width="5.500"/>
<path d="M518.500 420v42" stroke="#e27a76" stroke-width="1.500"/>
<ellipse cx="520" cy="418" rx="10" ry="2.800" fill="none" stroke="#d9504e" stroke-width="2.200"/>
<circle cx="524" cy="457" r="4.500" fill="none" stroke="#e2706a" stroke-width="2.500"/>
<path d="M540 470C552 466 566 470 578 478" stroke="#c83232" stroke-width="9" fill="none"/>
<ellipse cx="562" cy="468" rx="9" ry="5" fill="#c02c2e"/>
</g>
<rect x="474.500" y="386" width="103" height="102" fill="none" stroke="#17100c" stroke-width="2.200"/>
<rect x="474.500" y="386" width="103" height="102" fill="none" stroke="#e8962e" stroke-width="2.200" stroke-dasharray="10 9" stroke-dashoffset="-8"/>
<!-- warning triangle -->
<path d="M525.500 398.500L534.500 414H516.500z" fill="none" stroke="#f6eeee" stroke-width="1.800" stroke-linejoin="round"/>
<path d="M525.500 403v6.500" stroke="#f6eeee" stroke-width="1.800"/><circle cx="525.500" cy="411.700" r="1" fill="#f6eeee"/>
<!-- inner frames -->
<rect x="481" y="431.500" width="93" height="50.500" fill="none" stroke="#f1d9d8" stroke-width="1"/>
<rect x="483.500" y="434" width="88" height="45" fill="none" stroke="#e8b8b6" stroke-width=".8"/>
<text x="486.500" y="444.800" font-size="8.500" fill="#f0a030" letter-spacing="-.35">14:33 Danger!!!</text>
<!-- up/down -->
<rect x="554.500" y="435" width="13" height="13" fill="#f2f2f2"/><path d="M557 445h8l-4-7.500z" fill="#0c0c0c"/>
<rect x="554.500" y="449.500" width="13" height="13.500" fill="#f2f2f2"/><path d="M557 452.500h8l-4 7.500z" fill="#0c0c0c"/>
<!-- scroll bar -->
<rect x="485.500" y="463" width="69" height="13.500" fill="#e9e9e9"/>
<rect x="485.500" y="463" width="13" height="13.500" fill="#f7f7f7"/><path d="M495.500 465.500v8.500l-7.500-4.250z" fill="#0c0c0c"/>
<rect x="541.500" y="463" width="13" height="13.500" fill="#f7f7f7"/><path d="M544.500 465.500v8.500l7.500-4.250z" fill="#0c0c0c"/>
<text x="507.500" y="472.500" font-size="7.500" fill="#d44a4e" letter-spacing="-.2">GP_9</text>
<!-- small handles -->
<g fill="#0e0e0e" stroke="#f4f4f4" stroke-width=".8">
<rect x="515" y="397.500" width="3" height="3"/><rect x="533" y="397.500" width="3" height="3"/><rect x="515" y="412.500" width="3" height="3"/><rect x="533" y="412.500" width="3" height="3"/>
<rect x="472.500" y="384" width="3.500" height="3.500"/><rect x="576" y="384" width="3.500" height="3.500"/><rect x="472.500" y="486.500" width="3.500" height="3.500"/><rect x="576" y="486.500" width="3.500" height="3.500"/>
</g>
<g fill="none" stroke="#f1d9d8" stroke-width=".7"><rect x="482" y="432.500" width="3" height="3"/><rect x="570" y="432.500" width="3" height="3"/><rect x="482" y="478" width="3" height="3"/><rect x="570" y="478" width="3" height="3"/></g>
</g>
<g filter="url(#soft)">
<path d="M500 480C508 493 522 495.500 545 493.500C560 492 570 488.500 581 486.500" fill="none" stroke="#dc3434" stroke-width="8.500" stroke-linecap="round"/>
<path d="M503 481C510 490 524 492 545 490.500C560 489 570 486 580 484.500" fill="none" stroke="#f29a90" stroke-width="2.200" stroke-linecap="round"/>
<ellipse cx="509" cy="483" rx="7" ry="5" fill="#e4443e"/><ellipse cx="508" cy="482" rx="3.500" ry="2.500" fill="#f2a096"/>
<ellipse cx="548" cy="491" rx="5" ry="5.500" fill="none" stroke="#f08078" stroke-width="1.500"/>
</g>
<!-- ===== RED BOX 2 ===== -->
<g>
<rect x="662" y="399" width="105" height="103.500" fill="url(#gBox2)"/>
<g filter="url(#blur1)" clip-path="url(#cpB2)">
<!-- cylinder machine -->
<path d="M663 452L748 421C762 418 768 432 766.500 458L704 482L663 492z" fill="url(#gCyl)" opacity=".95"/>
<path d="M663 470C690 464 716 458 742 450V482L663 499z" fill="#e65a52" opacity=".95"/>
<path d="M663 474C676 468 692 468 702 476V498H663z" fill="#f48c7c" opacity=".95"/>
<path d="M686 441L748 422M688 446L750 427M690 451L752 432M692 456L752 438" stroke="#c22e32" stroke-width="1.400" opacity=".95"/>
<ellipse cx="757" cy="438" rx="8.500" ry="19" transform="rotate(-14 757 438)" fill="#d8484a" stroke="#f6a49c" stroke-width="4" opacity=".95"/>
<ellipse cx="676" cy="452" rx="7" ry="10" transform="rotate(-14 676 452)" fill="none" stroke="#f0908a" stroke-width="2.500" opacity=".8"/>
<!-- sketch lines -->
<g fill="none" stroke="#f2bcb6" stroke-width=".9" opacity=".9">
<path d="M676 416l18-7v22l-18 7zM694 409l10 5v22l-10-5M676 416l10 5 18-7M686 421v22"/>
<path d="M712 406l14-6v20l-14 6zM726 400l20-5v20l-20 5M736 398v20M746 395l8 4v18"/>
</g>
</g>
<rect x="662.500" y="399.500" width="104.500" height="103" fill="none" stroke="#17100c" stroke-width="2.200"/>
<rect x="662.500" y="399.500" width="104.500" height="103" fill="none" stroke="#e8962e" stroke-width="2.200" stroke-dasharray="10 9" stroke-dashoffset="-3"/>
<path d="M713.500 411.500L724.500 428.500H702.500z" fill="none" stroke="#f8f0f0" stroke-width="2" stroke-linejoin="round"/>
<path d="M713.500 416.500v6.500" stroke="#f8f0f0" stroke-width="2"/><circle cx="713.500" cy="425.600" r="1.100" fill="#f8f0f0"/>
<rect x="669" y="444.500" width="92.500" height="51.500" fill="none" stroke="#f6dcda" stroke-width="1.100"/>
<text x="674" y="457.500" font-size="9" fill="#ffb21e" stroke="#f59a10" stroke-width=".35" letter-spacing="-.25">14:33 Danger!!!</text>
<text x="676" y="458.500" font-size="9" fill="#f7941a" letter-spacing="-.25" opacity=".6" filter="url(#soft)">14:33 Danger!!!</text>
<rect x="742.500" y="448.500" width="13.500" height="13" fill="#f3f3f3"/><path d="M745 458.500h8.500l-4.250-7.500z" fill="#0c0c0c"/>
<rect x="742.500" y="463" width="13.500" height="13.500" fill="#f3f3f3"/><path d="M745 466h8.500l-4.250 7.500z" fill="#0c0c0c"/>
<rect x="673" y="476.700" width="69.500" height="13.600" fill="#e6e6e6"/>
<rect x="673" y="476.700" width="13" height="13.600" fill="#f7f7f7"/><path d="M683 479.200v8.600l-7.500-4.300z" fill="#0c0c0c"/>
<rect x="729.500" y="476.700" width="13" height="13.600" fill="#f7f7f7"/><path d="M732.500 479.200v8.600l7.500-4.300z" fill="#0c0c0c"/>
</g>
<!-- ===== BOTTOM BUTTONS ===== -->
<g filter="url(#soft)">
<!-- red plate + yellow button -->
<path d="M483 560.500h62a2 2 0 0 1 2 2V593c0 4-8.500 4-8.500 10v30a2 2 0 0 1-2 2h-45a2 2 0 0 1-2-2v-30c0-6-8.500-6-8.500-10v-30.500a2 2 0 0 1 2-2z" fill="#e8272b"/>
<rect x="486" y="562.600" width="55.500" height="11" fill="#f1eeee" stroke="#b8b0b0" stroke-width=".6"/>
<ellipse cx="515" cy="613" rx="21" ry="20.500" fill="#2a1608" opacity=".75" filter="url(#blur1)"/>
<circle cx="514" cy="610" r="21.800" fill="#4a400c"/><circle cx="514" cy="608.800" r="20.300" fill="url(#gYel)"/>
<ellipse cx="512" cy="598" rx="13" ry="6" fill="#fbfb9a" opacity=".35"/>
<ellipse cx="510" cy="614" rx="7" ry="4" fill="#f7d23a" opacity=".5" transform="rotate(25 510 614)"/>
<!-- gray plate + green button -->
<path d="M559.500 560.500h62a2 2 0 0 1 2 2V593c0 4-8.500 4-8.500 10v30a2 2 0 0 1-2 2h-45a2 2 0 0 1-2-2v-30c0-6-8.500-6-8.500-10v-30.500a2 2 0 0 1 2-2z" fill="#5b5e66"/>
<rect x="562" y="562.600" width="56" height="11" fill="#f1f1f1" stroke="#a8a8a8" stroke-width=".6"/>
<ellipse cx="591.500" cy="613" rx="21" ry="20.500" fill="#0a1a08" opacity=".75" filter="url(#blur1)"/>
<circle cx="590.500" cy="610" r="21.800" fill="#123a10"/><circle cx="590.500" cy="608.800" r="20.300" fill="url(#gGrn)"/>
<ellipse cx="588.500" cy="598" rx="13" ry="6" fill="#c9ffb0" opacity=".35"/>
<ellipse cx="586.500" cy="614" rx="7" ry="4" fill="#a8f08a" opacity=".45" transform="rotate(25 586.500 614)"/>
<!-- switch 1 -->
<path d="M637.500 560h61a2 2 0 0 1 2 2V592c0 4-7.500 4-7.500 10v31a2 2 0 0 1-2 2h-46a2 2 0 0 1-2-2v-31c0-6-7.500-6-7.500-10v-30a2 2 0 0 1 2-2z" fill="#e9e9ec"/>
<circle cx="669" cy="613" r="18.500" fill="#101010" opacity=".5" filter="url(#blur1)"/>
<circle cx="668.500" cy="611.500" r="18" fill="url(#gKnob)"/>
<path d="M663.800 599a1.500 1.500 0 0 1 1.500-1.500h6.400a1.500 1.500 0 0 1 1.500 1.500l-1 41.500a1.500 1.500 0 0 1-1.500 1.500h-4.400a1.500 1.500 0 0 1-1.500-1.500z" fill="#2e2e30" stroke="#050505" stroke-width=".8"/>
<path d="M665.500 600v40" stroke="#5a5a5e" stroke-width=".8"/>
<circle cx="668.500" cy="604.500" r="1.200" fill="#000"/>
<!-- switch 2 -->
<path d="M713.500 560h62a2 2 0 0 1 2 2V592c0 4-8 4-8 10v31a2 2 0 0 1-2 2h-46a2 2 0 0 1-2-2v-31c0-6-8-6-8-10v-30a2 2 0 0 1 2-2z" fill="#e9e9ec"/>
<circle cx="745" cy="610" r="21.500" fill="#101010" opacity=".45" filter="url(#blur1)"/>
<circle cx="744.400" cy="608.500" r="20.500" fill="url(#gKnob)"/>
<circle cx="744.400" cy="608.500" r="14" fill="none" stroke="#3c3c3e" stroke-width="3"/>
<circle cx="744.400" cy="608.500" r="9.500" fill="#d9d9d9" stroke="#8a8a8a"/>
<circle cx="742.500" cy="606.500" r="5" fill="#fafafa"/>
<rect x="742" y="590" width="5" height="40" rx="1" fill="#f2f2f2" stroke="#6a6a6a" stroke-width=".6"/>
<rect x="744.800" y="590" width="2.200" height="40" fill="#9a9a9a"/>
<g font-size="5" font-weight="bold" fill="#111" letter-spacing="-.3"><text x="651" y="567.500">OFF</text><text x="683.500" y="567.500">ON</text><text x="727" y="567.500">OFF</text><text x="759.500" y="567.500">ON</text></g>
<!-- emergency stop -->
<circle cx="846" cy="588" r="46" fill="#14161d" opacity=".5" filter="url(#blur3)"/>
<circle cx="843.100" cy="590.700" r="44.600" fill="#f5d60e"/>
<circle cx="843.100" cy="590.700" r="44" fill="none" stroke="#c9a608" stroke-width="1.200"/>
<ellipse cx="843.500" cy="598" rx="28" ry="25" fill="#3a1a08" opacity=".8" filter="url(#blur1)"/>
<ellipse cx="843" cy="592" rx="27" ry="25.600" fill="url(#gRedB)"/>
<ellipse cx="843" cy="589" rx="25.500" ry="22.500" fill="#dd4a30"/>
<g fill="none" stroke="#f6e4dc" stroke-width="1.100">
<path d="M826.500 594A17 17 0 0 1 838 574.500"/><path d="M848 574.500A17 17 0 0 1 859.500 594"/><path d="M853 604.500A17 17 0 0 1 833 604.500"/>
</g>
<g fill="#f6e4dc"><path d="M836.500 572l4 2.200-3.500 2.800z"/><path d="M857 593l2.800 3.800 1.700-4.300z"/><path d="M831.500 602.500l4.300 .5-2.300 3.800z"/></g>
<path id="arcTop" d="M811 574A36 36 0 0 1 874.500 572.500" fill="none"/>
<path id="arcBot" d="M818.500 621.500A39.500 39.500 0 0 0 867.500 621.500" fill="none"/>
<text font-size="8.600" font-weight="bold" fill="#15130a" letter-spacing="0"><textPath href="#arcTop" startOffset="50%" text-anchor="middle">EMERGENCY</textPath></text>
<text font-size="9" font-weight="bold" fill="#15130a" letter-spacing="1.800"><textPath href="#arcBot" startOffset="50%" text-anchor="middle">STOP</textPath></text>
</g>
<!-- ===== LABELS ===== -->
<g font-size="7.500" fill="#ee1f28" letter-spacing="-.2" filter="url(#soft)">
<text transform="translate(239 144.3) scale(.86 1)" font-size="8.70">GP_8</text>
<text transform="translate(239 552.8) scale(.86 1)" font-size="8.70">GP_1</text>
<text transform="translate(600 268.3) scale(.86 1)" font-size="9.86">TB_0</text>
<text transform="translate(614 291.3) scale(.86 1)" font-size="8.70">BG_1 (LW-0)</text>
<text transform="translate(696 256.3) scale(.86 1)" font-size="7.54">GP</text>
<text transform="translate(715 270.8) scale(.86 1)" font-size="7.54">GP_5</text><text transform="translate(735 272.3) scale(.86 1)" font-size="7.54">GP_7</text>
<text transform="translate(775 268.3) scale(.86 1)" font-size="7.54">GP</text>
<text transform="translate(797 296.3) scale(.86 1)" font-size="7.54">GP_11</text><text transform="translate(801 312.3) scale(.86 1)" font-size="7.54">GP_10</text>
<text transform="translate(804 345.3) scale(.86 1)" font-size="7.54">GP</text><text transform="translate(804 372.3) scale(.86 1)" font-size="7.54">GP_8</text><text transform="translate(797 401.3) scale(.86 1)" font-size="7.54">GP</text>
<text transform="translate(832 246.8) scale(.86 1)" font-size="8.12">ML_0</text>
<text transform="translate(267 438.8) scale(.86 1)" font-size="8.70">TB_0</text>
<text transform="translate(316 436.8) scale(.86 1)" font-size="8.70">GP_28 GP_27</text>
<text transform="translate(305 459.3) scale(.86 1)" font-size="8.70">GP_29</text>
<text transform="translate(267 495.3) scale(.86 1)" font-size="8.70">GP_31</text>
<text transform="translate(305 495.3) scale(.86 1)" font-size="8.70">GP_30</text>
<text transform="translate(379 430.8) scale(.86 1)" font-size="8.70">BG_0 (LW-0)</text>
<text transform="translate(352 402.3) scale(.86 1)" font-size="7.54">GP</text><text transform="translate(428 408.3) scale(.86 1)" font-size="7.54">GP_26</text>
<text transform="translate(449 433.3) scale(.86 1)" font-size="7.54">GP</text>
<text transform="translate(466 388.3) scale(.86 1)" font-size="7.54">GP</text>
<text transform="translate(610 440.3) scale(.86 1)" font-size="7.54">GP</text><text transform="translate(630 462.3) scale(.86 1)" font-size="7.54">GP_25</text><text transform="translate(596 487.3) scale(.86 1)" font-size="7.54">GP_24</text>
<text transform="translate(650 403.3) scale(.86 1)" font-size="7.54">GP</text><text transform="translate(768 420.3) scale(.86 1)" font-size="7.54">GP</text>
<text transform="translate(482 568.8) scale(.86 1)" font-size="8.70">GP_32</text>
<text transform="translate(558 568.8) scale(.86 1)" font-size="8.70">GP_31</text>
<text transform="translate(636 567.8) scale(.86 1)" font-size="8.70">GP_30</text>
<text transform="translate(711 567.8) scale(.86 1)" font-size="8.70">GP_29</text>
<text transform="translate(493 592.3) scale(.86 1)" font-size="8.12" opacity=".8">BL_1 (LW-0)</text>
<text transform="translate(566 592.3) scale(.86 1)" font-size="8.12" opacity=".8">BL_0 (LW-0)</text>
<text transform="translate(637.5 591.3) scale(.86 1)" font-size="8.70">MS_1 (LW-0)</text>
<text transform="translate(723 595.3) scale(.86 1)" font-size="8.12" opacity=".85">MS_0 (LW-0)</text>
<text transform="translate(797 551.8) scale(.86 1)" font-size="8.12">GP_33</text>
<text transform="translate(815 572.3) scale(.86 1)" font-size="8.12" opacity=".8">BL_2 (LB-0)</text>
<text transform="translate(562 456.3) scale(.86 1)" font-size="7.54" opacity=".9">26</text>
</g>
<!-- selection handles -->
<g fill="#1c22b8" filter="url(#soft)">
<circle cx="469.500" cy="380.500" r="2.600"/><circle cx="523.500" cy="380" r="2.600"/><circle cx="580.500" cy="380.500" r="2.600"/>
<circle cx="469.500" cy="434" r="2.600"/><circle cx="580.500" cy="434" r="2.600"/>
<circle cx="469.500" cy="490.500" r="2.600"/><circle cx="525" cy="493" r="2.600"/><circle cx="580.500" cy="491" r="2.600"/>
<rect x="260.500" y="495.500" width="4" height="4"/><rect x="305" y="495.500" width="4" height="4"/>
</g>
</svg>

</div>
<svg class="a" style="left:203px;top:455px" width="12" height="16" viewBox="0 0 12 16"><path d="M1 1v11.500l2.800-2.500 2 4.500 2-1-2-4.300h3.700z" fill="#fff" stroke="#222" stroke-width=".9" stroke-linejoin="round"/></svg>
<!-- scrollbars -->
<div class="a" style="left:989px;top:111px;width:12px;height:546px;background:#f0f0f0"></div>
<svg class="a" style="left:992px;top:129px" width="6" height="4"><path d="M0 3.5h6L3 0z" fill="#444"/></svg>
<svg class="a" style="left:992px;top:650px" width="6" height="4"><path d="M0 0h6L3 3.5z" fill="#444"/></svg>
<div class="a" style="left:990px;top:245px;width:10px;height:296px;border:1px solid #b8b8b8;border-radius:2px;background:linear-gradient(90deg,#f2f2f2,#dadada)"></div>
<div class="a" style="left:154px;top:657px;width:835px;height:13px;background:#f0f0f0"></div>
<svg class="a" style="left:172px;top:661px" width="4" height="6"><path d="M3.5 0v6L0 3z" fill="#444"/></svg>
<svg class="a" style="left:981px;top:661px" width="4" height="6"><path d="M0 0v6l3.5-3z" fill="#444"/></svg>
<div class="a" style="left:310px;top:659px;width:536px;height:10px;border:1px solid #b8b8b8;border-radius:2px;background:linear-gradient(#f2f2f2,#d8d8d8)"></div>
<div class="a" style="left:574px;top:662px;width:5px;height:4px;background:repeating-linear-gradient(90deg,#888 0 1px,transparent 1px 2px)"></div>
<div class="a" style="left:989px;top:657px;width:12px;height:13px;background:#f0f0f0"></div>

<!-- RIGHT PANEL -->
<div class="a" style="left:1006px;top:96px;width:274px;height:578px;background:#eef2f8"></div>
<div class="hdr" style="left:1006px;top:96px;width:274px">
  <div class="t" style="letter-spacing:-0.487px;left:5px">Picture Library</div>
  <svg class="a" style="left:250px;top:3px" width="8" height="7"><path d="M0 1.5h7L3.5 6z" fill="#222"/></svg>
  <svg class="a" style="left:262px;top:2px" width="9" height="9"><path d="M1.5 1.5l5.5 5.5M7 1.5L1.5 7" stroke="#222" stroke-width="1.4"/></svg>
</div>
<div class="a" style="left:1009px;top:109px;width:269px;height:548px;background:#f0f0f0;border:1px solid #d4dbe6"></div>
<div class="a" style="left:1013px;top:115px;width:260px;height:14px;border:1px solid #8c8c8c;border-radius:2px;background:linear-gradient(#f6f6f6,#dadada)">
  <div class="t" style="left:3px;top:2.5px;font-size:8px;color:#111">alarm</div>
  <svg class="a" style="left:250px;top:5px" width="7" height="5"><path d="M0 0h6L3 4z" fill="#222"/></svg>
</div>
<div class="a" style="left:1013px;top:131px;width:260px;height:15px;border:1px solid #d0d0d0;border-radius:2px;background:#efefef">
  <div class="t" style="left:4px;top:3px;font-size:8px;color:#777;letter-spacing:-.35px">c:\ebpro\library\picture\alarm\alarm.flbx</div>
</div>
<div id="grid" class="a" style="left:1013px;top:149px;width:246px;height:490px;overflow:hidden;background:#f0f0f0">
<svg width="0" height="0" style="position:absolute"><defs>
<symbol id="flame" viewBox="0 0 38 53"><path fill-rule="evenodd" d="M19 53C9 53 3 48 1.200 41C-.5 34 .5 24 3.500 16.500C4 21 5.500 24 7.500 26.500C6.500 19 7.500 13 9.500 7.500C10 12 11 15 12.500 17.500C12.500 11 14 5 16.500 0C17 5 18.500 9 20.500 12.500C21 10 22 8 23.500 6C23.500 10 24.500 13.500 26 16.500C26.500 14.500 27.500 12.500 29 11C29 15 29.500 19 30.500 22.500C32 21 33.500 19.500 35 17.500C37.500 24 38.500 32 37 40C35.500 48 29 53 19 53zM19 50.500C24.500 50.500 28 47.500 27.500 43.500L24.500 34.500L22.500 39L18.500 30.500L15.500 40L12.500 36L10.500 43.500C10 47.500 13.500 50.500 19 50.500z"/></symbol>
<symbol id="bell" viewBox="0 0 55 41"><circle cx="27.500" cy="2.500" r="2.200"/><path d="M27.500 2.500C20 2.500 17.500 9.500 17 16.500C16.600 21.500 15.500 24 13.500 26.500H41.500C39.500 24 38.400 21.500 38 16.500C37.500 9.500 35 2.500 27.500 2.500z"/><path d="M23.800 28.500a3.700 2.800 0 0 0 7.400 0z"/><path d="M15 6C8.500 13.500 8.500 24.500 15 34.500M11.500 2C-.5 13 -.5 28 11.500 39M40 6C46.500 13.500 46.500 24.500 40 34.500M43.500 2C55.500 13 55.500 28 43.500 39" fill="none" stroke="currentColor" stroke-width="3.600" stroke-linecap="round"/></symbol>
<symbol id="cone" viewBox="0 0 20 22"><path d="M8.600 1h2.800l1.200 4H7.400zM6.700 7.300h6.600l1.300 4.200H5.400zM4.700 13.800h10.600l1.100 3.600H3.600zM1 18.600h18V21.500H1z"/></symbol>
<symbol id="bolt" viewBox="0 0 19 53"><path d="M8.500 0H17.500L11.500 19.500L18.500 17L12.500 41.500L16.500 40.500L9.500 53L4.500 39.500L8.500 41.500L11 25.500L0 31z"/></symbol>
</defs></svg>
<div class="cn" style="left:10px;top:-34.4px">12</div>
<div class="cell" style="left:7px;top:-24.9px"><svg class="a" style="left:13px;top:7px" width="40" height="53" viewBox="0 0 40 53"><rect x="1" y="1" width="38" height="51" rx="2" fill="#fff" stroke="#d8232f" stroke-width="2"/><rect x="1" y="40" width="38" height="12" fill="#d8232f"/><use href="#bolt" x="15" y="4" width="10" height="28" fill="#111" color="#111"/><text x="20" y="49" font-family="Liberation Sans,sans-serif" font-weight="bold" font-size="6.500" text-anchor="middle" fill="#fff" letter-spacing=".3">DANGER</text></svg></div>
<div class="cn" style="left:90px;top:-34.4px">13</div>
<div class="cell" style="left:87px;top:-24.9px"><svg class="a" style="left:13px;top:7px" width="40" height="53" viewBox="0 0 40 53"><rect x=".75" y=".75" width="38.500" height="51.500" rx="2.500" fill="#fff" stroke="#e7a6aa" stroke-width="1"/><rect x="3" y="3" width="34" height="36" fill="#e8222d"/><use href="#bolt" x="15" y="4" width="10" height="28" fill="#fff" color="#fff"/><text x="20" y="49" font-family="Liberation Sans,sans-serif" font-weight="bold" font-size="6.500" text-anchor="middle" fill="#d8232f" letter-spacing=".3">DANGER</text></svg></div>
<div class="cn" style="left:170px;top:-34.4px">14</div>
<div class="cell" style="left:167px;top:-24.9px"><svg class="a" style="left:7px;top:9px" width="54" height="50" viewBox="0 0 54 50"><path d="M27 4L51.500 46.500h-49z" fill="#f7e921" stroke="#111" stroke-width="3.400" stroke-linejoin="round"/><use href="#flame" x="20.5" y="19.5" width="13" height="18" fill="#111" color="#111"/></svg></div>
<div class="cn" style="left:10px;top:52.2px">15</div>
<div class="cell" style="left:7px;top:61.7px"><svg class="a" style="left:13px;top:7px" width="40" height="53" viewBox="0 0 40 53"><rect x="1" y="1" width="38" height="51" rx="2" fill="#fff" stroke="#d8232f" stroke-width="2"/><rect x="1" y="40" width="38" height="12" fill="#d8232f"/><use href="#flame" x="11.5" y="8" width="17" height="24" fill="#111" color="#111"/><text x="20" y="49" font-family="Liberation Sans,sans-serif" font-weight="bold" font-size="6.500" text-anchor="middle" fill="#fff" letter-spacing=".3">DANGER</text></svg></div>
<div class="cn" style="left:90px;top:52.2px">16</div>
<div class="cell" style="left:87px;top:61.7px"><svg class="a" style="left:13px;top:7px" width="40" height="53" viewBox="0 0 40 53"><rect x=".75" y=".75" width="38.500" height="51.500" rx="2.500" fill="#fff" stroke="#e7a6aa" stroke-width="1"/><rect x="3" y="3" width="34" height="36" fill="#e8222d"/><use href="#flame" x="11.5" y="8" width="17" height="24" fill="#fff" color="#fff"/><text x="20" y="49" font-family="Liberation Sans,sans-serif" font-weight="bold" font-size="6.500" text-anchor="middle" fill="#d8232f" letter-spacing=".3">DANGER</text></svg></div>
<div class="cn" style="left:170px;top:52.2px">17</div>
<div class="cell" style="left:167px;top:61.7px"><svg class="a" style="left:7px;top:9px" width="54" height="50" viewBox="0 0 54 50"><path d="M27 4L51.500 46.500h-49z" fill="#f7e921" stroke="#111" stroke-width="3.400" stroke-linejoin="round"/><use href="#bell" x="15.5" y="24" width="23" height="16" fill="#111" color="#111"/></svg></div>
<div class="cn" style="left:10px;top:138.8px">18</div>
<div class="cell" style="left:7px;top:148.3px"><svg class="a" style="left:13px;top:7px" width="40" height="53" viewBox="0 0 40 53"><rect x="1" y="1" width="38" height="51" rx="2" fill="#fff" stroke="#d8232f" stroke-width="2"/><rect x="1" y="40" width="38" height="12" fill="#d8232f"/><use href="#bell" x="7" y="11.5" width="26" height="19.5" fill="#111" color="#111"/><text x="20" y="49" font-family="Liberation Sans,sans-serif" font-weight="bold" font-size="6.500" text-anchor="middle" fill="#fff" letter-spacing=".3">DANGER</text></svg></div>
<div class="cn" style="left:90px;top:138.8px">19</div>
<div class="cell" style="left:87px;top:148.3px"><svg class="a" style="left:13px;top:7px" width="40" height="53" viewBox="0 0 40 53"><rect x=".75" y=".75" width="38.500" height="51.500" rx="2.500" fill="#fff" stroke="#e7a6aa" stroke-width="1"/><rect x="3" y="3" width="34" height="36" fill="#e8222d"/><use href="#bell" x="7" y="11.5" width="26" height="19.5" fill="#fff" color="#fff"/><text x="20" y="49" font-family="Liberation Sans,sans-serif" font-weight="bold" font-size="6.500" text-anchor="middle" fill="#d8232f" letter-spacing=".3">DANGER</text></svg></div>
<div class="cn" style="left:170px;top:138.8px">20</div>
<div class="cell" style="left:167px;top:148.3px"><svg class="a" style="left:7px;top:9px" width="54" height="50" viewBox="0 0 54 50"><path d="M27 4L51.500 46.500h-49z" fill="#f7e921" stroke="#111" stroke-width="3.400" stroke-linejoin="round"/><use href="#cone" x="19.5" y="22" width="15" height="17" fill="#111" color="#111"/></svg></div>
<div class="cn" style="left:10px;top:225.4px">21</div>
<div class="cell" style="left:7px;top:234.9px"><svg class="a" style="left:13px;top:7px" width="40" height="53" viewBox="0 0 40 53"><rect x="1" y="1" width="38" height="51" rx="2" fill="#fff" stroke="#d8232f" stroke-width="2"/><rect x="1" y="40" width="38" height="12" fill="#d8232f"/><use href="#cone" x="9" y="7.5" width="22" height="25" fill="#111" color="#111"/><text x="20" y="49" font-family="Liberation Sans,sans-serif" font-weight="bold" font-size="6.500" text-anchor="middle" fill="#fff" letter-spacing=".3">DANGER</text></svg></div>
<div class="cn" style="left:90px;top:225.4px">22</div>
<div class="cell" style="left:87px;top:234.9px"><svg class="a" style="left:13px;top:7px" width="40" height="53" viewBox="0 0 40 53"><rect x=".75" y=".75" width="38.500" height="51.500" rx="2.500" fill="#fff" stroke="#e7a6aa" stroke-width="1"/><rect x="3" y="3" width="34" height="36" fill="#e8222d"/><use href="#cone" x="9" y="7.5" width="22" height="25" fill="#fff" color="#fff"/><text x="20" y="49" font-family="Liberation Sans,sans-serif" font-weight="bold" font-size="6.500" text-anchor="middle" fill="#d8232f" letter-spacing=".3">DANGER</text></svg></div>
<div class="cn" style="left:170px;top:225.4px">23</div>
<div class="cell" style="left:167px;top:234.9px"><svg class="a" style="left:7px;top:9px" width="54" height="50" viewBox="0 0 54 50"><path d="M27 4L51 44.500h-48z" fill="#fff" stroke="#111" stroke-width="3.800" stroke-linejoin="round"/><path d="M24 15.500c0-3 6-3 6 0l-1.400 16.500h-3.200z" fill="#111"/><circle cx="27" cy="37" r="2.900" fill="#111"/></svg></div>
<div class="a" style="left:0.5px;top:307.8px;width:81.500px;height:87px;background:#f6f42c"></div>
<div class="cn" style="left:10px;top:312.0px">24</div>
<div class="cell" style="left:7px;top:321.5px"></div>
<div class="cn" style="left:90px;top:312.0px">25</div>
<div class="cell" style="left:87px;top:321.5px"><svg class="a" style="left:0;top:0" width="68" height="68" viewBox="0 0 68 68"><use href="#bolt" x="24.5" y="7.5" width="19" height="53" fill="#111" color="#111"/></svg></div>
<div class="cn" style="left:170px;top:312.0px">26</div>
<div class="cell" style="left:167px;top:321.5px"></div>
<div class="cn" style="left:10px;top:398.6px">27</div>
<div class="cell" style="left:7px;top:408.1px"><svg class="a" style="left:0;top:0" width="68" height="68" viewBox="0 0 68 68"><use href="#flame" x="14.5" y="6.5" width="38" height="53" fill="#111" color="#111"/></svg></div>
<div class="cn" style="left:90px;top:398.6px">28</div>
<div class="cell" style="left:87px;top:408.1px"></div>
<div class="cn" style="left:170px;top:398.6px">29</div>
<div class="cell" style="left:167px;top:408.1px"><svg class="a" style="left:0;top:0" width="68" height="68" viewBox="0 0 68 68"><use href="#bell" x="7" y="11.5" width="55" height="41" fill="#111" color="#111"/></svg></div>
<div class="cn" style="left:10px;top:485.2px">30</div>
<div class="cell" style="left:7px;top:494.7px"></div>
<div class="cn" style="left:90px;top:485.2px">31</div>
<div class="cell" style="left:87px;top:494.7px"></div>
<div class="cn" style="left:170px;top:485.2px">32</div>
<div class="cell" style="left:167px;top:494.7px"></div>
</div>
<!-- right scrollbar -->
<svg class="a" style="left:1264px;top:155px" width="5" height="4"><path d="M0 3.5h5L2.5 0z" fill="#444"/></svg>
<svg class="a" style="left:1264px;top:629px" width="5" height="4"><path d="M0 0h5L2.5 3.5z" fill="#444"/></svg>
<div class="a" style="left:1261px;top:357px;width:11px;height:10px;border:1px solid #a8a8a8;border-radius:1px;background:linear-gradient(#fafafa,#d6d6d6)"></div>
<!-- slider -->
<div class="a" style="left:1016px;top:646px;width:252px;height:1px;background:#b4b4b4"></div>
<div class="a" style="left:1264px;top:642px;width:5px;height:9px;border:1px solid #888;border-radius:1px;background:#f4f4f4"></div>
<div class="btab" style="left:1009px;width:55px">Shape Library</div>
<div class="btab on" style="left:1063px;top:657px;width:58px;padding-top:4px">Picture Library</div>
<div class="btab" style="left:1120px;width:57px">Sound Library</div>

<div class="a" style="left:0;top:14px;width:1px;height:680px;background:#2a4a78"></div><div class="a" style="left:1279px;top:14px;width:1px;height:680px;background:#5a7aa6"></div>
<!-- STATUS BAR -->
<div id="status" class="a" style="left:0;top:674px;width:1280px;height:19px;background:#f3f3f3;border-top:1px solid #e2e2e2">
  <div class="t" style="letter-spacing:-0.437px;left:2px">MT8092XE (1024 x 768)</div>
  <div class="s" style="left:139px"></div><div class="s" style="left:280px"></div><div class="s" style="left:564px"></div><div class="s" style="left:630px"></div>
  <div class="s" style="left:695px"></div><div class="t" style="letter-spacing:-0.074px;left:700px">X = -48</div>
  <div class="s" style="left:744px"></div><div class="t" style="letter-spacing:-0.308px;left:749px">Y = 481</div>
  <div class="s" style="left:792px"></div>
  <div class="s" style="left:891px"></div><div class="t" style="letter-spacing:-0.484px;left:896px">CAP</div>
  <div class="s" style="left:916px"></div><div class="t" style="letter-spacing:-0.073px;left:920px">NUM</div>
  <div class="s" style="left:943px"></div><div class="t" style="letter-spacing:-0.711px;left:947px">SCRL</div>
  <div class="s" style="left:969px"></div>
  <div class="t" style="letter-spacing:-0.338px;left:1135px">100 %</div>
  <div class="a" style="left:1161px;top:9px;width:112px;height:1px;background:#bdbdbd"></div>
  <div class="a" style="left:1168px;top:2.500px;width:101px;height:2px;background:repeating-linear-gradient(90deg,#777 0 1px,transparent 1px 16.6px)"></div>
  <div class="a" style="left:1199px;top:5px;width:6px;height:10px;border:1px solid #888;border-radius:1px 1px 3px 3px;background:#f6f6f6"></div>
</div>

<!-- TASKBAR -->
<div id="taskbar" class="a" style="left:0;top:693px;width:1280px;height:27px;background:linear-gradient(90deg,#4588c2 0,#4c98d2 120px,#4ba0d8 300px,#3f96d2 450px,#2f86c8 600px,#2474bd 760px,#1f62aa 900px,#1f5496 1050px,#27568f 1200px,#2c5c96 1280px)">
  <div class="a" style="left:0;top:0;width:1280px;height:27px;background:linear-gradient(rgba(255,255,255,.22),rgba(255,255,255,.04) 45%,rgba(0,10,60,.10))"></div><div class="a" style="left:0;top:0;width:1280px;height:1px;background:rgba(255,255,255,.4)"></div>

  <svg class="a" style="left:0;top:0" width="1280" height="26"><path d="M846 -3C880 2 905 12 928 30" fill="none" stroke="#9ccdf2" stroke-width="5" opacity=".55" filter="url(#blur1)"/><path d="M420 -2L470 28L560 28L650 -2z" fill="#7cc0ee" opacity=".12"/></svg>
  <!-- start orb -->
  <div class="a" style="left:6.500px;top:2px;width:23px;height:23px;border-radius:50%;background:radial-gradient(circle at 50% 30%,#9ad4f6 0,#3f8cc8 50%,#245a94 85%);box-shadow:0 0 3px rgba(190,230,255,.8),inset 0 0 2px #d6eefc"></div>
  <svg class="a" style="left:11px;top:6px" width="15" height="15" viewBox="0 0 15 15"><path d="M1.500 3.500c2-1.200 3.500-1 5 0L5.500 7.200c-1.500-1-3-1.200-5 0z" fill="#e8552d"/><path d="M7.500 3.800c2 1.200 3.500 1 5.500 0l-1 3.700c-2 1-3.500 1.200-5.500 0z" fill="#7fba2c"/><path d="M.8 8c2-1.200 3.500-1 5 0L4.800 11.700c-1.500-1-3-1.200-5 0z" fill="#3d9be0"/><path d="M6.800 8.300c2 1.200 3.500 1 5.500 0l-1 3.700c-2 1-3.500 1.200-5.500 0z" fill="#f7c71c"/></svg>
  <!-- IE -->
  <svg class="a" style="left:47px;top:2px" width="23" height="23" viewBox="0 0 23 23"><circle cx="11.500" cy="12" r="7" fill="none" stroke="#3db3f0" stroke-width="3.600"/><rect x="8" y="10.800" width="12" height="2.600" fill="#3db3f0"/><rect x="14" y="13.400" width="7" height="3" fill="#2a7fc3"/><path d="M2.500 19C0 14 8 4 20 2.500" fill="none" stroke="#f3c63b" stroke-width="1.800" stroke-linecap="round"/></svg>
  <!-- WMP -->
  <div class="a" style="left:90px;top:6px;width:15px;height:16px;border-radius:2px;background:linear-gradient(135deg,#f4b878,#dc8234);border:1.500px solid #dfe6ee;opacity:.95"></div>
  <div class="a" style="left:92.500px;top:9px;width:10px;height:10px;border-radius:50%;background:#fff"></div>
  <svg class="a" style="left:95.500px;top:11px" width="6" height="6"><path d="M.5 0l5 3-5 3z" fill="#e07a22"/></svg>
  <!-- Explorer (highlighted) -->
  <div class="a" style="left:122px;top:1px;width:39px;height:25px;border:1px solid rgba(255,255,255,.45);border-radius:2px;background:linear-gradient(rgba(255,255,255,.35),rgba(255,255,255,.12))"></div>
  <div class="a" style="left:131px;top:6px;width:21px;height:16px;border-radius:1px;background:linear-gradient(#f8e9a8,#e9c860);border:1px solid #c9a63f"></div>
  <div class="a" style="left:133px;top:4px;width:9px;height:3px;background:#f0d98a;border-radius:1px 1px 0 0"></div>
  <div class="a" style="left:134px;top:12px;width:15px;height:8px;background:#9fc7e6;border:1px solid #f7f3e0"></div>
  <!-- EB app -->
  <div class="a" style="left:163px;top:1px;width:39px;height:25px;border:1px solid rgba(255,255,255,.6);border-radius:2px;background:linear-gradient(rgba(255,255,255,.55),rgba(255,255,255,.25))"></div>
  <div class="a" style="left:172px;top:3px;width:21px;height:21px;border-radius:3px;background:#56669a;border:1.500px solid #141c44"></div>
  <div class="a" style="left:176px;top:8px;width:13px;height:11px;border:1.500px solid #e9edf6"></div>
  <svg class="a" style="left:180px;top:12px" width="10" height="10"><path d="M1 1v6l2-1.500L4.500 9 6 8.200 4.500 5H7z" fill="#fff" stroke="#2e3a68" stroke-width=".6"/></svg>
  <!-- third app -->
  <div class="a" style="left:204px;top:1px;width:39px;height:25px;border:1px solid rgba(255,255,255,.4);border-radius:2px;background:linear-gradient(rgba(255,255,255,.3),rgba(255,255,255,.1))"></div>
  <div class="a" style="left:216px;top:6px;width:15px;height:15px;background:linear-gradient(135deg,#3a3a2c,#111);border:1px solid #888;transform:rotate(45deg) scale(.82)"></div>
  <div class="a" style="left:221px;top:9px;width:6px;height:6px;background:#c9a945;transform:rotate(45deg)"></div>
  <!-- tray -->
  <svg class="a" style="left:1161px;top:8px" width="7" height="5"><path d="M0 4.500h6L3 .5z" fill="#fff"/></svg>
  <svg class="a" style="left:1175px;top:4px" width="12" height="12" viewBox="0 0 12 12"><path d="M1.500 1v10" stroke="#ddd" stroke-width="1.200"/><path d="M2.500 1.500c2.500-1 4 1 7 0v5.500c-3 1-4.500-1-7 0z" fill="#f4f4f4"/><circle cx="8.500" cy="8.500" r="2.800" fill="#d8282a"/><path d="M7.300 7.300l2.400 2.400M9.700 7.300L7.300 9.700" stroke="#fff" stroke-width=".9"/></svg>
  <svg class="a" style="left:1190px;top:5px" width="13" height="12" viewBox="0 0 13 12"><rect x="3.500" y="1.500" width="8" height="6.500" fill="#2c4e78" stroke="#e8eef6"/><rect x="1" y="5" width="3" height="5.500" fill="#e8eef6"/><path d="M5.500 10.500h5" stroke="#e8eef6" stroke-width="1.200"/></svg>
  <svg class="a" style="left:1206px;top:5px" width="12" height="12" viewBox="0 0 12 12"><path d="M1 4.500h2.500L6.500 2v8L3.500 7.500H1z" fill="#f2f2f2"/><path d="M8 4c1 1 1 3 0 4M9.500 2.500c2 2 2 5 0 7" stroke="#f2f2f2" fill="none" stroke-width=".9"/></svg>
  <div class="t" style="left:1229.500px;top:3.500px;font-size:8.500px;color:#fff;letter-spacing:-.3px">10:43 AM</div>
  <div class="t" style="left:1231px;top:14.500px;font-size:8.500px;color:#fff;letter-spacing:-.3px">9/21/2017</div>
  <div class="a" style="left:1273px;top:0;width:7px;height:26px;background:linear-gradient(90deg,rgba(255,255,255,.25),rgba(255,255,255,.08));border-left:1px solid rgba(255,255,255,.35)"></div>
</div>
</body>
</html>
